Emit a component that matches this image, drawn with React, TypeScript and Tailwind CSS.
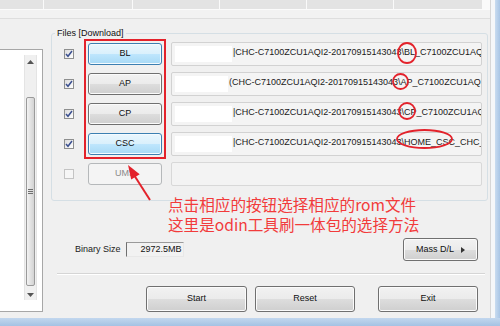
import React from "react";

const FONT = "font-['Liberation_Sans',Arial,sans-serif]";

const GRAY_BTN =
  "border border-[#707070] rounded-[3px] bg-[linear-gradient(#f2f2f2_0%,#ebebeb_50%,#dddddd_51%,#cfcfcf_100%)] shadow-[inset_0_0_0_1px_#fbfbfb] text-[#111]";
const BLUE_BTN =
  "border border-[#3c7fb1] rounded-[3px] bg-[linear-gradient(#eaf6fd_0%,#d9f0fc_50%,#bee6fd_51%,#a7d9f5_100%)] shadow-[inset_0_0_0_1px_#f4fbff] text-[#111]";

type Row = {
  label: string;
  blue: boolean;
  pad: number;
  text: string;
};

const ROWS: Row[] = [
  { label: "BL", blue: true, pad: 57, text: "|CHC-C7100ZCU1AQI2-20170915143043\\BL_C7100ZCU1AQI2" },
  { label: "AP", blue: false, pad: 53, text: "(CHC-C7100ZCU1AQI2-20170915143043\\AP_C7100ZCU1AQI2_" },
  { label: "CP", blue: false, pad: 57, text: "|CHC-C7100ZCU1AQI2-20170915143043\\CP_C7100ZCU1AQI2" },
  { label: "CSC", blue: true, pad: 57, text: "|CHC-C7100ZCU1AQI2-20170915143043\\HOME_CSC_CHC_C7" },
];

function Check({ on }: { on: boolean }) {
  if (!on)
    return <div className="w-[10px] h-[10px] border border-[#c4c4c4] bg-[#f6f6f6]" />;
  return (
    <div className="w-[10px] h-[10px] border border-[#8e8f8f] bg-[linear-gradient(135deg,#dcdcdc,#ffffff)] flex items-center justify-center">
      <svg width="8" height="8" viewBox="0 0 8 8">
        <path d="M1 4 L3 6.3 L7 1" fill="none" stroke="#3a4f8f" strokeWidth="1.5" />
      </svg>
    </div>
  );
}

function Scrollbar() {
  return (
    <div className="w-[13px] h-[245px] flex flex-col bg-[#f0f0f0] border-x border-[#e4e4e4]">
      <div className="h-[14px] flex items-center justify-center">
        <svg width="7" height="4" viewBox="0 0 7 4">
          <path d="M0 4 L3.5 0 L7 4 Z" fill="#555" />
        </svg>
      </div>
      <div className="h-[28px]" />
      <div className="h-[189px] mx-[1px] border border-[#9a9a9a] rounded-[2px] bg-[linear-gradient(90deg,#f3f3f3,#e2e2e2_50%,#d3d3d3)] flex items-center justify-center">
        <div className="flex flex-col gap-[1px]">
          <div className="w-[5px] h-[1px] bg-[#6e6e6e]" />
          <div className="w-[5px] h-[1px] bg-[#6e6e6e]" />
          <div className="w-[5px] h-[1px] bg-[#6e6e6e]" />
        </div>
      </div>
      <div className="h-[3px]" />
      <div className="h-[11px] flex items-center justify-center">
        <svg width="7" height="4" viewBox="0 0 7 4">
          <path d="M0 0 L3.5 4 L7 0 Z" fill="#555" />
        </svg>
      </div>
    </div>
  );
}

export default function App() {
  return (
    <div className={`relative w-[500px] h-[326px] overflow-hidden bg-[#f0f0f0] ${FONT} text-[9px] text-[#111]`}>
      <div className="flex h-[318px]">
        <div className="w-[490px] flex flex-col">
          {/* tab strip */}
          <div className="h-[9px] flex gap-px bg-[#fafafa]">
            <div className="w-[43px] bg-[#e3e3e3]" />
            <div className="w-[88px] bg-[#e3e3e3]" />
            <div className="w-[86px] bg-[#e3e3e3]" />
            <div className="w-[86px] bg-[#e3e3e3]" />
            <div className="w-[86px] bg-[#e3e3e3]" />
            <div className="w-[88px] bg-[#e3e3e3]" />
          </div>
          <div className="h-[9px] bg-[#f2f2f2] border-t border-[#fbfbfb]" />
          <div className="h-px bg-[#dedede]" />

          <div className="flex flex-1">
            {/* log panel */}
            <div className="w-[43px] mt-[30px] h-[263px] bg-white border-t border-r border-b border-[#a7a7a7] flex">
              <div className="ml-[24px] mt-[5px]">
                <Scrollbar />
              </div>
            </div>

            <div className="ml-[8px] w-[437px] flex flex-col">
              {/* files group */}
              <div className="relative mt-[14px] h-[168px] border border-[#d5dfe5] rounded-[3px] pt-[8px] flex flex-col gap-[6px]">
                <div className="absolute -top-[7px] left-[3px] px-[2px] bg-[#f0f0f0] leading-[12px]">
                  Files [Download]
                </div>
                {ROWS.map((r) => (
                  <div key={r.label} className="h-[24px] flex items-center">
                    <div className="ml-[12px]">
                      <Check on />
                    </div>
                    <div
                      className={`ml-[14px] w-[74px] h-[22px] flex items-center justify-center ${
                        r.blue ? BLUE_BTN : GRAY_BTN
                      }`}
                    >
                      {r.label}
                    </div>
                    <div className="ml-[9px] w-[311px] h-[24px] border border-[#d2d2d2] rounded-[2px] bg-[#f4f4f4] flex items-center overflow-hidden">
                      <div className="ml-[3px] h-[16px] bg-white shrink-0" style={{ width: r.pad }} />
                      <span className="ml-[1px] whitespace-nowrap pb-[3px] text-[#1a1a1a]">
                        {r.text}
                      </span>
                    </div>
                  </div>
                ))}
                <div className="h-[24px] flex items-center">
                  <div className="ml-[12px]">
                    <Check on={false} />
                  </div>
                  <div className="ml-[14px] w-[74px] h-[22px] flex items-center justify-center border border-[#b5b8ba] rounded-[3px] bg-[#f4f4f4] text-[#8a8a8a]">
                    UMS
                  </div>
                  <div className="ml-[9px] w-[311px] h-[24px] border border-[#d8d8d8] rounded-[2px] bg-[#f3f3f3]" />
                </div>
              </div>

              {/* binary size + mass d/l */}
              <div className="mt-[37px] h-[23px] flex items-center">
                <span className="ml-[24px] text-[#222]">Binary Size</span>
                <div className="ml-[5px] w-[58px] h-[15px] border-l border-t border-l-[#707070] border-t-[#9a9a9a] border-r border-b border-r-[#e8e8e8] border-b-[#e8e8e8] bg-[#f2f2f2] flex items-center justify-end pr-[1px]">
                  2972.5MB
                </div>
                <div className={`ml-auto mr-[10px] w-[75px] h-[23px] flex items-center justify-center gap-[7px] ${GRAY_BTN}`}>
                  <span>Mass D/L</span>
                  <svg width="4" height="6" viewBox="0 0 4 6">
                    <path d="M0 0 L4 3 L0 6 Z" fill="#333" />
                  </svg>
                </div>
              </div>

              <div className="mt-[12px] ml-[6px] mr-[3px] border-t border-[#d5d5d5] border-b border-b-white" />

              <div className="mt-[11px] flex">
                <div className={`ml-[95px] w-[101px] h-[26px] flex items-center justify-center ${GRAY_BTN}`}>Start</div>
                <div className={`ml-[8px] w-[100px] h-[26px] flex items-center justify-center ${GRAY_BTN}`}>Reset</div>
                <div className={`ml-[23px] w-[100px] h-[26px] flex items-center justify-center ${GRAY_BTN}`}>Exit</div>
              </div>
            </div>
          </div>
        </div>
        <div className="w-px bg-[#d6d6d6]" />
        <div className="w-[4px] bg-[#f5f7f9]" />
        <div className="w-[5px] bg-[linear-gradient(90deg,#c9dcf0,#a8c5e5)]" />
      </div>
      <div className="h-[8px] bg-[linear-gradient(#c2d7ee,#a4c2e3)]" />

      {/* annotations */}
      <div className="absolute left-[84px] top-[39px] w-[82px] h-[120px] border-2 border-[#e3222b]" />
      <svg className="absolute inset-0 pointer-events-none" width="500" height="326" viewBox="0 0 500 326">
        <g fill="none" stroke="#e3222b" strokeWidth="1.8">
          <ellipse cx="407" cy="53" rx="9" ry="10" />
          <ellipse cx="400.5" cy="81.5" rx="7.5" ry="7.5" />
          <ellipse cx="407" cy="111" rx="8" ry="8" />
          <ellipse cx="424.5" cy="139" rx="27.5" ry="9" />
          <line x1="150" y1="200" x2="134" y2="175" strokeWidth="2" />
        </g>
        <path d="M128 165 L139.7 174.3 L131.2 179.6 Z" fill="#e3222b" />
      </svg>
      <div className="absolute left-[168px] top-[194px] text-[15.6px] leading-[20px] text-[#f23b3b] font-['Noto_Sans_CJK_SC','Noto_Sans',sans-serif] whitespace-nowrap">
        <div>点击相应的按钮选择相应的rom文件</div>
        <div>这里是odin工具刷一体包的选择方法</div>
      </div>
    </div>
  );
}
